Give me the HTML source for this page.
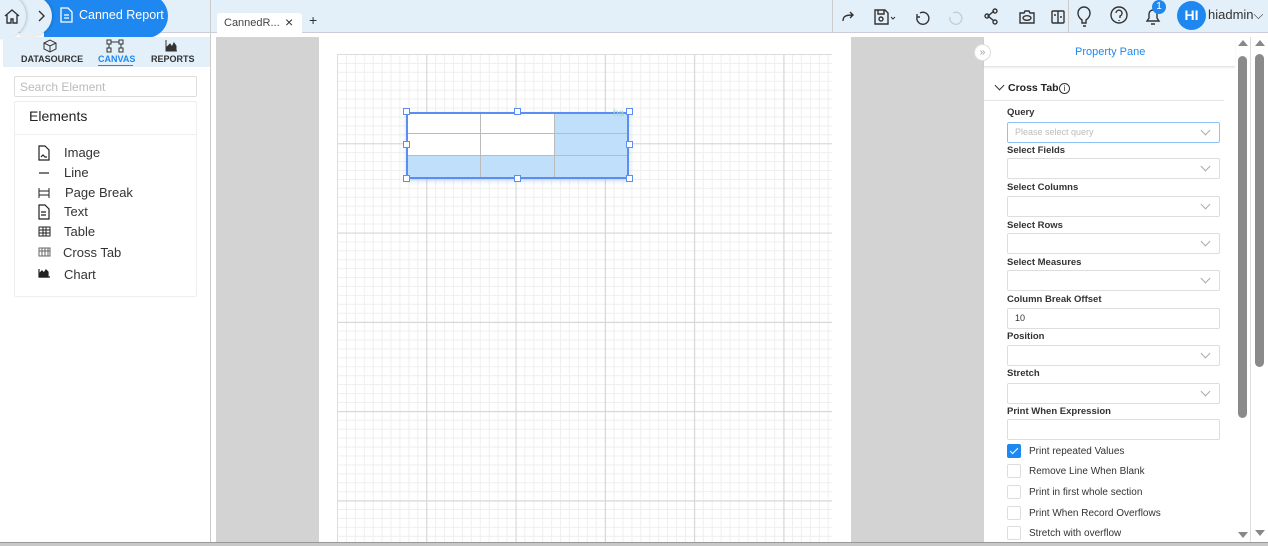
<!DOCTYPE html>
<html><head><meta charset="utf-8"><style>
*{box-sizing:border-box;margin:0;padding:0}
body{width:1268px;height:546px;overflow:hidden;position:relative;background:#fff;font-family:"Liberation Sans",sans-serif;color:#222}
.a{position:absolute}
.lbl{position:absolute;left:1007px;font-size:9.5px;font-weight:bold;color:#333}
.box{position:absolute;left:1007px;width:213px;height:21px;border:1px solid #ddd;border-radius:2px;background:#fff}
.chev{position:absolute;right:10px;top:4px;width:7px;height:7px;border-right:1px solid #aaa;border-bottom:1px solid #aaa;transform:rotate(45deg)}
.cb{position:absolute;left:1007px;width:14px;height:14px;border:1px solid #ddd;border-radius:2px;background:#fff}
.ct{position:absolute;left:1029px;font-size:10px;color:#333}
.el{position:absolute;left:64px;font-size:13px;color:#333}
</style></head><body>
<!-- top bar -->
<div class="a" style="left:0;top:0;width:1268px;height:33px;background:#e3f0fa;border-bottom:1px solid #ccd"></div>
<div class="a" style="left:44px;top:-6px;width:124px;height:44px;border-radius:0 22px 22px 0;background:#1e88f0"></div>
<div class="a" style="left:20px;top:-4px;width:32px;height:40px;border-radius:0 20px 20px 0;background:#e3f0fa;box-shadow:1px 0 3px rgba(0,0,0,.18)"></div>
<div class="a" style="left:-10px;top:-6px;width:36px;height:44px;border-radius:0 22px 22px 0;background:#e3f0fa;box-shadow:1px 0 3px rgba(0,0,0,.2)"></div>
<svg class="a" style="left:3px;top:7px" width="18" height="18" viewBox="0 0 18 18"><path d="M2 9L9 3l7 6M4 8v8h4v-4h2v4h4V8" fill="none" stroke="#333" stroke-width="1.4"/></svg>
<svg class="a" style="left:37px;top:9px" width="10" height="14" viewBox="0 0 10 14"><path d="M2 2l5 5-5 5" fill="none" stroke="#333" stroke-width="1.4"/></svg>
<svg class="a" style="left:60px;top:7px" width="13" height="16" viewBox="0 0 13 16"><path d="M1 1h7l4 4v10H1z M4 8h5M4 11h5" fill="none" stroke="#fff" stroke-width="1.3"/></svg>
<div class="a" style="left:79px;top:8px;font-size:12.5px;color:#fff">Canned Report</div>
<div class="a" style="left:210px;top:0;width:1px;height:546px;background:#ccc"></div>
<div class="a" style="left:217px;top:13px;width:85px;height:20px;background:#fff;border-radius:3px 3px 0 0"></div>
<div class="a" style="left:224px;top:17px;font-size:11px;color:#444">CannedR...</div>
<div class="a" style="left:285px;top:14px;font-size:14px;color:#333">×</div>
<div class="a" style="left:309px;top:12px;font-size:14px;color:#333">+</div>
<div class="a" style="left:832px;top:0;width:1px;height:33px;background:#ccc"></div>
<div class="a" style="left:1068px;top:0;width:1px;height:33px;background:#ccc"></div>
<svg class="a" style="left:840px;top:6px" width="230" height="22" viewBox="0 0 230 22" fill="none" stroke="#333" stroke-width="1.4">
<path d="M3 15c0-5 3-6 10-6M10 6l3 3-3 3"/>
<path d="M35 4h10l3 3v11H35z M38 4v4h6V4 M41 13m-2 0a2 2 0 1 0 4 0a2 2 0 1 0-4 0"/><path d="M51 11l2 2 2-2" stroke-width="1"/>
<path d="M80 7a6 6 0 1 1-3 4M77 8v3h3"/>
<path d="M113 7a6 6 0 1 1-3 4" stroke="#ccc"/>
<path d="M154 5l-6 5 6 5" /><circle cx="155" cy="5" r="2"/><circle cx="155" cy="16" r="2"/><circle cx="147" cy="10" r="2"/>
<path d="M180 7h4l1-2h4l1 2h4v10h-14z"/><ellipse cx="187" cy="12" rx="4" ry="2.3"/>
<rect x="212" y="5" width="12" height="12" rx="1"/><path d="M218 5v12M214 9h2M220 11h2"/>
</svg>
<svg class="a" style="left:1075px;top:5px" width="110" height="24" viewBox="0 0 110 24" fill="none" stroke="#333" stroke-width="1.4">
<path d="M7 15c-3-2-4-4-4-7a6 6 0 0 1 12 0c0 3-1 5-4 7v3h-4z M8 21h3"/>
<circle cx="44" cy="10" r="8"/><path d="M41 8a3 3 0 1 1 4 3v2M44 15v1"/>
<path d="M72 16h12l-2-3V9a4 4 0 0 0-8 0v4z M76 19h4"/>
</svg>
<div class="a" style="left:1152px;top:0;width:14px;height:14px;border-radius:7px;background:#1e88f0;color:#fff;font-size:10px;text-align:center;line-height:14px">1</div>
<div class="a" style="left:1177px;top:1px;width:29px;height:29px;border-radius:15px;background:#1e88f0;color:#fff;font-size:14px;font-weight:bold;text-align:center;line-height:29px">HI</div>
<div class="a" style="left:1208px;top:7px;font-size:13px;color:#333">hiadmin⌵</div>

<!-- left panel -->
<div class="a" style="left:3px;top:37px;width:207px;height:30px;background:#e3f0fa"></div>
<svg class="a" style="left:40px;top:39px" width="150" height="14" viewBox="0 0 150 14" fill="none" stroke="#333" stroke-width="1">
<path d="M4 4l6-3 6 3v6l-6 3-6-3z M4 4l6 3 6-3M10 7v6"/>
<rect x="67" y="1" width="4" height="4"/><rect x="79" y="1" width="4" height="4"/><rect x="67" y="9" width="4" height="4"/><rect x="79" y="9" width="4" height="4"/><path d="M71 3h8M69 5v4M81 5v4"/>
<path d="M126 1v11h11" /><path d="M127 11V8l3-3 2 3 2-4 2 3v4z" fill="#333"/>
</svg>
<div class="a" style="left:21px;top:54px;font-size:9px;font-weight:bold;color:#333">DATASOURCE</div>
<div class="a" style="left:98px;top:54px;font-size:9px;font-weight:bold;color:#1e88f0">CANVAS</div>
<div class="a" style="left:98px;top:65px;width:35px;height:1px;background:#1e88f0"></div>
<div class="a" style="left:151px;top:54px;font-size:9px;font-weight:bold;color:#333">REPORTS</div>
<div class="a" style="left:14px;top:76px;width:183px;height:21px;border:1px solid #ddd;border-radius:2px"></div>
<div class="a" style="left:20px;top:80px;font-size:12px;color:#bbb">Search Element</div>
<div class="a" style="left:14px;top:101px;width:183px;height:196px;border:1px solid #eee;border-radius:2px"></div>
<div class="a" style="left:14px;top:134px;width:183px;height:1px;background:#f0f0f0"></div>
<div class="a" style="left:29px;top:108px;font-size:14px;color:#222">Elements</div>
<svg class="a" style="left:37px;top:144px" width="18" height="140" viewBox="0 0 18 140" fill="none" stroke="#222" stroke-width="1.2">
<path d="M2 2h6l4 4v10H2z M4 13l2-2 2 2h2"/>
<path d="M2 29h10"/>
<path d="M2 44v10M12 44v10M2 47h10M2 51h10" stroke-width="1"/>
<path d="M2 61h6l4 4v10H2z M4 68h5M4 71h5"/>
<path d="M2 83h11v9H2z M2 86h11M2 89h11M6 83v9M9 83v9" stroke-width="1"/>
<path d="M2 104h11v8H2z M2 107h11M5 104v8M8 104v8M11 104v8" stroke="#666" stroke-width="1"/>
<path d="M2 125v8h11"/><path d="M3 133v-4l2-2 2 2 2-3 2 2v5z" fill="#222"/>
</svg>
<div class="el" style="top:145px">Image</div>
<div class="el" style="top:165px">Line</div>
<div class="el" style="top:185px;left:65px">Page Break</div>
<div class="el" style="top:204px">Text</div>
<div class="el" style="top:224px">Table</div>
<div class="el" style="top:245px;left:63px">Cross Tab</div>
<div class="el" style="top:267px">Chart</div>

<!-- canvas area -->
<div class="a" style="left:216px;top:37px;width:103px;height:505px;background:#d3d3d3"></div>
<div class="a" style="left:851px;top:37px;width:133px;height:505px;background:#d3d3d3"></div>
<div class="a" style="left:337px;top:54px;width:495px;height:488px;border-top:1px solid #ddd;border-left:1px solid #ddd;
background-image:linear-gradient(#d4d4d4 1px,transparent 1px),linear-gradient(90deg,#d4d4d4 1px,transparent 1px),linear-gradient(#efefef 1px,transparent 1px),linear-gradient(90deg,#efefef 1px,transparent 1px);
background-size:89.3px 89.3px,89.3px 89.3px,8.93px 8.93px,8.93px 8.93px;background-position:-1px -1px"></div>
<!-- crosstab -->
<div class="a" style="left:406px;top:112px;width:223px;height:67px;border:2px solid #5b8ef0;background:#fff;box-shadow:0 2px 4px rgba(91,142,240,.3)"></div>
<div class="a" style="left:555px;top:114px;width:72px;height:63px;background:#bfdffb"></div>
<div class="a" style="left:408px;top:156px;width:219px;height:21px;background:#bfdffb"></div>
<div class="a" style="left:408px;top:133px;width:219px;height:1px;background:#bbb"></div>
<div class="a" style="left:408px;top:155px;width:219px;height:1px;background:#bbb"></div>
<div class="a" style="left:480px;top:114px;width:1px;height:63px;background:#bbb"></div>
<div class="a" style="left:554px;top:114px;width:1px;height:63px;background:#bbb"></div>
<div class="a" style="left:613px;top:108px;font-size:10px;color:#9ddcc0">ha</div>
<div class="a" style="left:403px;top:108px;width:7px;height:7px;border:1px solid #5b8ef0;background:#fff"></div>
<div class="a" style="left:514px;top:108px;width:7px;height:7px;border:1px solid #5b8ef0;background:#fff"></div>
<div class="a" style="left:626px;top:108px;width:7px;height:7px;border:1px solid #5b8ef0;background:#fff"></div>
<div class="a" style="left:403px;top:141px;width:7px;height:7px;border:1px solid #5b8ef0;background:#fff"></div>
<div class="a" style="left:626px;top:141px;width:7px;height:7px;border:1px solid #5b8ef0;background:#fff"></div>
<div class="a" style="left:403px;top:175px;width:7px;height:7px;border:1px solid #5b8ef0;background:#fff"></div>
<div class="a" style="left:514px;top:175px;width:7px;height:7px;border:1px solid #5b8ef0;background:#fff"></div>
<div class="a" style="left:626px;top:175px;width:7px;height:7px;border:1px solid #5b8ef0;background:#fff"></div>

<!-- property pane -->
<div class="a" style="left:984px;top:37px;width:267px;height:505px;background:#fff;border-right:1px solid #ddd"></div>
<div class="a" style="left:984px;top:38px;width:251px;height:29px;border-bottom:1px solid #e6e6e6;box-shadow:0 1px 2px rgba(0,0,0,.08)"></div>
<div class="a" style="left:1075px;top:46px;font-size:11px;color:#1e88f0">Property Pane</div>
<div class="a" style="left:974px;top:44px;width:17px;height:17px;border-radius:9px;background:#fff;border:1px solid #ddd;font-size:10px;color:#999;text-align:center;line-height:15px">»</div>
<div class="a" style="left:996px;top:82px;width:7px;height:7px;border-right:1px solid #333;border-bottom:1px solid #333;transform:rotate(45deg)"></div>
<div class="a" style="left:1008px;top:82px;font-size:10.5px;font-weight:bold;color:#222">Cross Tab</div>
<div class="a" style="left:1059px;top:83px;width:11px;height:11px;border:1px solid #333;border-radius:6px;font-size:8px;text-align:center;line-height:9px">i</div>
<div class="a" style="left:984px;top:100px;width:240px;height:1px;background:#e6e6e6"></div>

<div class="lbl" style="top:107px">Query</div>
<div class="box" style="top:122px;border-color:#8ec3f5"><span style="position:absolute;left:7px;top:4px;font-size:9px;color:#bbb">Please select query</span><div class="chev"></div></div>
<div class="lbl" style="top:145px">Select Fields</div>
<div class="box" style="top:158px"><div class="chev"></div></div>
<div class="lbl" style="top:182px">Select Columns</div>
<div class="box" style="top:196px"><div class="chev"></div></div>
<div class="lbl" style="top:220px">Select Rows</div>
<div class="box" style="top:233px"><div class="chev"></div></div>
<div class="lbl" style="top:257px">Select Measures</div>
<div class="box" style="top:270px"><div class="chev"></div></div>
<div class="lbl" style="top:294px">Column Break Offset</div>
<div class="box" style="top:308px"><span style="position:absolute;left:7px;top:4px;font-size:9px;color:#333">10</span></div>
<div class="lbl" style="top:331px">Position</div>
<div class="box" style="top:345px"><div class="chev"></div></div>
<div class="lbl" style="top:368px">Stretch</div>
<div class="box" style="top:383px"><div class="chev"></div></div>
<div class="lbl" style="top:406px">Print When Expression</div>
<div class="box" style="top:419px"></div>
<div class="cb" style="top:444px;background:#1e88f0;border-color:#1e88f0"><div style="position:absolute;left:4px;top:1px;width:4px;height:8px;border-right:1.5px solid #fff;border-bottom:1.5px solid #fff;transform:rotate(45deg)"></div></div>
<div class="ct" style="top:446px">Print repeated Values</div>
<div class="cb" style="top:464px"></div><div class="ct" style="top:466px">Remove Line When Blank</div>
<div class="cb" style="top:485px"></div><div class="ct" style="top:487px">Print in first whole section</div>
<div class="cb" style="top:506px"></div><div class="ct" style="top:508px">Print When Record Overflows</div>
<div class="cb" style="top:526px"></div><div class="ct" style="top:528px">Stretch with overflow</div>

<!-- scrollbars -->
<div class="a" style="left:1238px;top:40px;width:0;height:0;border-left:5px solid transparent;border-right:5px solid transparent;border-bottom:6px solid #888"></div>
<div class="a" style="left:1238px;top:56px;width:9px;height:362px;border-radius:5px;background:#8a8a8a"></div>
<div class="a" style="left:1238px;top:532px;width:0;height:0;border-left:5px solid transparent;border-right:5px solid transparent;border-top:6px solid #888"></div>
<div class="a" style="left:1255px;top:40px;width:0;height:0;border-left:5px solid transparent;border-right:5px solid transparent;border-bottom:6px solid #888"></div>
<div class="a" style="left:1255px;top:54px;width:9px;height:313px;border-radius:5px;background:#8a8a8a"></div>
<div class="a" style="left:1255px;top:530px;width:0;height:0;border-left:5px solid transparent;border-right:5px solid transparent;border-top:6px solid #888"></div>
<div class="a" style="left:0;top:542px;width:1268px;height:4px;background:#c8c8c8;border-top:1px solid #999"></div>
</body></html>
